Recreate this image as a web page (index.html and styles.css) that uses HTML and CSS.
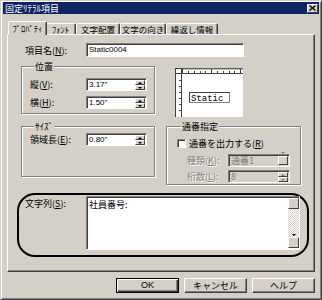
FILE: index.html
```html
<!DOCTYPE html>
<html>
  <head>
    <meta charset="utf-8" />
    <title>固定ﾘﾃﾗﾙ項目</title>
    <link rel="stylesheet" href="styles.css">
  </head>
  <body>
    <div class="window">
      <div class="titlebar">
        <span class="title">固定ﾘﾃﾗﾙ項目</span>
        <span class="close">
          <svg width="7" height="6" viewBox="0 0 7 6"><path d="M0.5 0.5 L6.5 5.5 M6.5 0.5 L0.5 5.5" stroke="#000" stroke-width="1.3"/></svg>
        </span>
      </div>

      <div class="tabs">
        <div class="tab active">ﾌﾟﾛﾊﾟﾃｨ</div>
        <div class="tab">ﾌｫﾝﾄ</div>
        <div class="tab">文字配置</div>
        <div class="tab">文字の向き</div>
        <div class="tab">繰返し情報</div>
      </div>

      <div class="panel">
        <div class="field name-row">
          <span class="label">項目名(<u>N</u>):</span>
          <div class="edit name-edit">Static0004</div>
        </div>

        <div class="groups">
          <fieldset class="group pos">
            <legend>位置</legend>
            <div class="field">
              <span class="label">縦(<u>V</u>):</span>
              <div class="edit num">3.17"<span class="spin"><i class="up"></i><i class="down"></i></span></div>
            </div>
            <div class="field">
              <span class="label">横(<u>H</u>):</span>
              <div class="edit num">1.50"<span class="spin"><i class="up"></i><i class="down"></i></span></div>
            </div>
          </fieldset>

          <div class="preview">
            <svg width="69" height="50" viewBox="0 0 69 50">
              <rect x="0" y="0" width="69" height="50" fill="#fff"/>
              <path d="M0.5 0 V50 M0 0.5 H69" stroke="#404040"/>
              <path d="M68.5 0 V50 M0 49.5 H69" stroke="#d4d0c8"/>
              <path d="M1 5.5 H68 M6.5 1 V49" stroke="#404040"/>
              <path d="M7 1 H68" stroke="#808080"/>
              <path d="M7.5 1 V5 M36.5 1 V5 M65.5 1 V5" stroke="#404040"/>
              <path d="M13.5 3 V5 M19.5 3 V5 M25.5 3 V5 M30.5 3 V5 M42.5 3 V5 M48.5 3 V5 M54.5 3 V5 M59.5 3 V5" stroke="#404040"/>
              <path d="M4 12.5 H6 M4 18.5 H6 M4 24.5 H6 M4 30.5 H6 M4 36.5 H6 M4 42.5 H6" stroke="#404040"/>
              <rect x="14.5" y="24.5" width="40" height="10" fill="#fff" stroke="#808080"/>
              <path d="M14.5 34.5 V24.5 H54.5" stroke="#404040" fill="none"/>
              <text x="16" y="32.5" class="static-text">Static</text>
            </svg>
          </div>

          <fieldset class="group size">
            <legend>ｻｲｽﾞ</legend>
            <div class="field">
              <span class="label">領域長(<u>E</u>):</span>
              <div class="edit num">0.80"<span class="spin"><i class="up"></i><i class="down"></i></span></div>
            </div>
          </fieldset>

          <fieldset class="group serial">
            <legend>通番指定</legend>
            <div class="check-row">
              <span class="checkbox"></span>
              <span>通番を出力する(<u>R</u>)</span>
            </div>
            <div class="field sub">
              <span class="label off">種類(<u>K</u>):</span>
              <div class="edit off-edit combo">通番1<span class="drop"><i class="down dim"></i></span></div>
            </div>
            <div class="field sub">
              <span class="label off">桁数(<u>L</u>):</span>
              <div class="edit off-edit combo">8<span class="spin"><i class="up dim"></i><i class="down dim"></i></span></div>
            </div>
          </fieldset>
        </div>

        <div class="marked">
          <span class="label text-label">文字列(<u>S</u>):</span>
          <div class="memo">
            <div class="memo-text">社員番号:</div>
            <div class="vscroll">
              <span class="sbtn"><i class="up"></i></span>
              <span class="track"></span>
              <span class="sbtn"><i class="down"></i></span>
            </div>
          </div>
        </div>
      </div>

      <div class="buttons">
        <div class="btn default">OK</div>
        <div class="btn">キャンセル</div>
        <div class="btn">ヘルプ</div>
      </div>
    </div>
  </body>
</html>
```

FILE: styles.css
```css
* {
  box-sizing: border-box;
}
body {
  margin: 0;
  font-family: "Noto Sans CJK JP", sans-serif;
  font-size: 9px;
  line-height: 9px;
  color: #000;
}
u {
  text-decoration-thickness: 1px;
  text-underline-offset: 1px;
}
.window {
  width: 322px;
  height: 300px;
  background: #d4d0c8;
  border: 1px solid;
  border-color: #d4d0c8 #404040 #404040 #d4d0c8;
  box-shadow: inset 1px 1px #fff, inset -1px -1px #808080;
  padding: 1px 2px 2px;
}
.titlebar {
  height: 12px;
  background: #0e2463;
  color: #fff;
  display: flex;
  align-items: center;
  justify-content: space-between;
  padding: 0 1px 0 2px;
}
.close {
  width: 11px;
  height: 9px;
  background: #d4d0c8;
  border: 1px solid;
  border-color: #fff #404040 #404040 #fff;
  display: flex;
  align-items: center;
  justify-content: center;
}
.close svg {
  display: block;
}

/* tabs */
.tabs {
  display: flex;
  align-items: flex-end;
  height: 13px;
  margin-top: 7px;
  padding-left: 7px;
}
.tab {
  height: 11px;
  padding-top: 1px;
  text-align: center;
  font-size: 8.5px;
  border: 1px solid;
  border-bottom: 0;
  border-color: #fff #404040 #404040 #fff;
  border-radius: 2px 2px 0 0;
  box-shadow: inset -1px 0 #808080;
  white-space: nowrap;
  overflow: hidden;
}
.tab:nth-child(2) { width: 31px; }
.tab:nth-child(3) { width: 44px; }
.tab:nth-child(4) { width: 46px; }
.tab:nth-child(5) { width: 52px; }
.tab.active {
  width: 39px;
  height: 14px;
  margin: 0 -2px -1px -2px;
  padding-top: 2px;
  background: #d4d0c8;
  position: relative;
  z-index: 1;
}

/* panel */
.panel {
  width: 308px;
  height: 238px;
  margin-left: 4px;
  border: 1px solid;
  border-color: #fff #404040 #404040 #fff;
  box-shadow: inset -1px -1px #808080;
  padding-top: 8px;
}
.field {
  display: flex;
  align-items: center;
}
.label {
  flex: none;
  white-space: nowrap;
}
.name-row {
  padding-left: 17px;
}
.name-row .label {
  width: 61px;
}
.edit {
  position: relative;
  height: 14px;
  background: #fff;
  border: 1px solid;
  border-color: #808080 #fff #fff #808080;
  box-shadow: inset 1px 1px #404040;
  font-family: "Liberation Sans", sans-serif;
  font-size: 8px;
  line-height: 12px;
  padding-left: 2px;
}
.name-edit {
  width: 158px;
}

/* group boxes */
.groups {
  display: grid;
  grid-template-columns: 134px 135px;
  column-gap: 11px;
  row-gap: 4px;
  align-items: start;
  margin: 5px 0 0 13px;
}
.group {
  margin: 0;
  min-width: 0;
  border: 1px solid #808080;
  box-shadow: 1px 1px #fff, inset 1px 1px #fff;
}
.group legend {
  padding: 0 1px;
  margin-left: 4px;
  line-height: 9px;
  background: #d4d0c8;
}
.pos {
  padding: 7px 0 4px 8px;
}
.pos .field + .field {
  margin-top: 5px;
}
.group .label {
  width: 56px;
}
.num {
  width: 61px;
  height: 13px;
}
.spin {
  position: absolute;
  right: 1px;
  top: 1px;
  width: 10px;
  display: flex;
  flex-direction: column;
}
.spin i,
.drop,
.sbtn {
  display: flex;
  align-items: center;
  justify-content: center;
  background: #d4d0c8;
  border: 1px solid;
  border-color: #fff #404040 #404040 #fff;
}
.spin i {
  height: 5px;
}
i.up::before,
i.down::before {
  content: "";
  border-left: 2px solid transparent;
  border-right: 2px solid transparent;
}
i.up::before {
  border-bottom: 2px solid #000;
}
i.down::before {
  border-top: 2px solid #000;
}
i.dim.up::before {
  border-bottom-color: #808080;
}
i.dim.down::before {
  border-top-color: #808080;
}

.preview {
  margin: 6px 0 0 9px;
  width: 69px;
  height: 50px;
}
.preview svg {
  display: block;
}
.static-text {
  font-family: "Liberation Mono", monospace;
  font-size: 9px;
}

.size {
  padding: 2px 0 30px 8px;
}
.serial {
  padding: 7px 0 1px 10px;
}
.check-row {
  display: flex;
  align-items: center;
  height: 11px;
  margin-bottom: 5px;
}
.checkbox {
  width: 9px;
  height: 9px;
  margin-right: 3px;
  background: #fff;
  border: 1px solid;
  border-color: #808080 #fff #fff #808080;
  box-shadow: inset 1px 1px #404040;
}
.field.sub {
  padding-left: 10px;
}
.field.sub + .field.sub {
  margin-top: 3px;
}
.serial .label {
  width: 41px;
}
.off {
  color: #808080;
  text-shadow: 1px 1px #fff;
}
.off-edit {
  background: #d4d0c8;
  color: #808080;
  font-family: "Noto Sans CJK JP", sans-serif;
  font-size: 9px;
  line-height: 11px;
}
.combo {
  width: 62px;
  height: 13px;
}
.drop {
  position: absolute;
  right: 1px;
  top: 1px;
  width: 10px;
  height: 9px;
}

/* string area, circled */
.marked {
  display: flex;
  align-items: flex-start;
  width: 292px;
  height: 64px;
  margin: 8px 0 0 9px;
  border: 2px solid #000;
  border-radius: 18px;
  padding: 1px 0 0 6px;
}
.text-label {
  width: 61px;
  margin-top: 3px;
}
.memo {
  display: flex;
  width: 214px;
  height: 54px;
  background: #fff;
  border: 1px solid;
  border-color: #808080 #fff #fff #808080;
  box-shadow: inset 1px 1px #404040;
  padding: 1px 0 0 1px;
}
.memo-text {
  flex: 1;
  padding: 2px 0 0 1px;
}
.vscroll {
  width: 11px;
  display: flex;
  flex-direction: column;
  margin-bottom: 1px;
}
.sbtn {
  height: 11px;
}
.track {
  flex: 1;
  background: repeating-conic-gradient(#d4d0c8 0 25%, #fff 0 50%) 0 0 / 2px 2px;
}

/* dialog buttons */
.buttons {
  display: flex;
  justify-content: flex-end;
  gap: 5px;
  margin: 6px 4px 0 0;
}
.btn {
  width: 63px;
  height: 15px;
  display: flex;
  align-items: center;
  justify-content: center;
  border: 1px solid;
  border-color: #fff #404040 #404040 #fff;
  box-shadow: inset -1px -1px #808080;
}
.btn.default {
  border-color: #000;
  box-shadow: inset 1px 1px #fff, inset -1px -1px #404040, inset -2px -2px #808080;
  font-family: "Liberation Sans", sans-serif;
}
```
